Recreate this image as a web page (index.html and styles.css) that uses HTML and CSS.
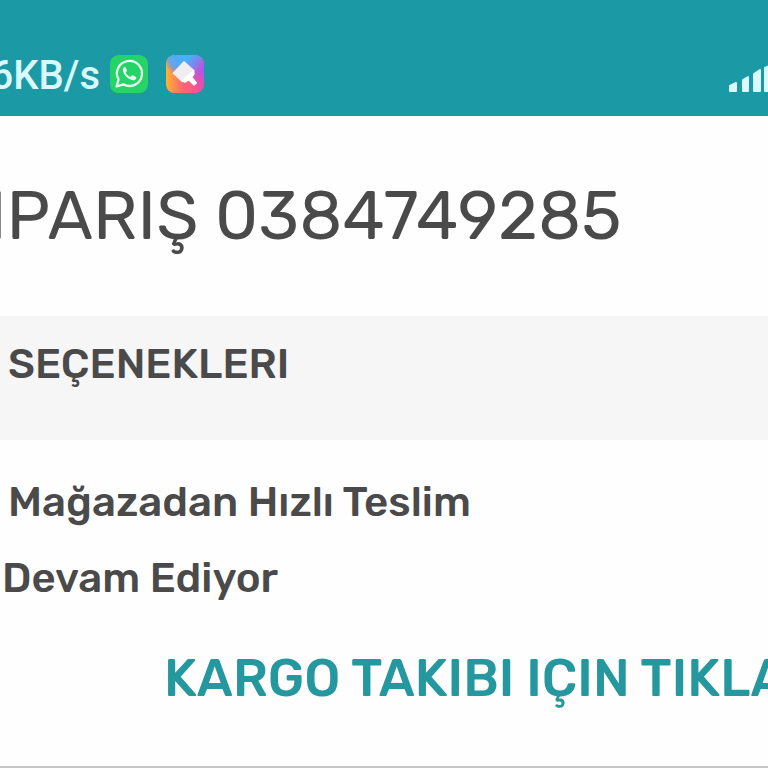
FILE: index.html
```html
<!DOCTYPE html>
<html lang="tr">
  <head>
    <meta charset="UTF-8" />
    <meta name="viewport" content="width=device-width, initial-scale=1.0" />
    <title>Sipariş</title>
    <link rel="stylesheet" href="styles.css">
  </head>
  <body>
    <div class="statusbar">
      <div class="speed"><span>6KB/s</span></div>
      <svg class="app" viewBox="0 0 40 40" aria-hidden="true">
        <rect width="40" height="40" rx="9" fill="#25d366" />
        <path d="M7 33l2-7.200a13.200 13.200 0 1 1 5.300 5.200z" fill="none" stroke="#e9fff0" stroke-width="2.400" stroke-linejoin="round" />
        <path d="M15.300 12.700c-1.200.6-2 2-1.700 3.600.8 4.800 5.500 9.600 10.300 10.300 1.700.2 3.200-.7 3.700-2.200.2-.8.100-1.200-.5-1.500l-3.100-1.500c-.5-.2-.9-.1-1.200.3l-1.200 1.500c-2.300-.9-4-2.500-5.100-4.700l1.200-1.500c.2-.3.200-.7.100-1l-1.400-3.100c-.2-.4-.6-.5-1.100-.2z" fill="#e9fff0" />
      </svg>
      <svg class="app" viewBox="0 0 40 40" aria-hidden="true">
        <defs>
          <linearGradient id="base" x1="0" y1="0" x2="1" y2="0">
            <stop offset="0" stop-color="#fdb52e" />
            <stop offset="0.400" stop-color="#ff6a6e" />
            <stop offset="1" stop-color="#f846a8" />
          </linearGradient>
          <radialGradient id="blue" cx="0.500" cy="0" r="0.600">
            <stop offset="0" stop-color="#3fb4ff" />
            <stop offset="0.700" stop-color="#4fa8fb" stop-opacity="0.900" />
            <stop offset="1" stop-color="#7a80f0" stop-opacity="0" />
          </radialGradient>
          <radialGradient id="purple" cx="1" cy="0.400" r="0.500">
            <stop offset="0" stop-color="#a35cf5" />
            <stop offset="1" stop-color="#c050e0" stop-opacity="0" />
          </radialGradient>
        </defs>
        <rect width="40" height="40" rx="9" fill="url(#base)" />
        <rect width="40" height="40" rx="9" fill="url(#blue)" />
        <rect width="40" height="40" rx="9" fill="url(#purple)" />
        <path d="M19 7.500L29 16.500 17 27.500 8 19z" fill="#f0eef2" stroke="#f0eef2" stroke-width="2" stroke-linejoin="round" />
        <path d="M17 27.500L29 16.500 29.500 20 27 23.500 32 29.500 29.500 31.500 24 26 20 28.500z" fill="#fff" stroke="#fff" stroke-width="1.500" stroke-linejoin="round" />
      </svg>
      <svg class="signal" viewBox="0 0 39 28" aria-hidden="true">
        <g fill="#d9fbff" stroke="#d9fbff" stroke-width="2" stroke-linejoin="round">
          <path d="M1 22l6-3v8H1z" />
          <path d="M14 16l5-3v14h-5z" />
          <path d="M25 10l6-4v21h-6z" />
          <path d="M36 4l6-3v26h-6z" />
        </g>
      </svg>
    </div>

    <h1 class="title">IPARIŞ 0384749285</h1>

    <h2 class="section">SEÇENEKLERI</h2>

    <div class="delivery">
      <p>Mağazadan Hızlı Teslim</p>
      <p class="state">Devam Ediyor</p>
      <a class="tracking" href="#">KARGO TAKIBI IÇIN TIKLA</a>
    </div>
  </body>
</html>
```

FILE: styles.css
```css
* {
  box-sizing: border-box;
}
body {
  margin: 0;
  background-color: #fefefe;
  color: #4a4a4a;
  font-family: Rubik, Inter, sans-serif;
  overflow-x: hidden;
}
.statusbar {
  display: flex;
  align-items: center;
  gap: 18px;
  height: 116px;
  padding-top: 32px;
  background-color: #1b9aa6;
}
.speed {
  display: flex;
  justify-content: flex-end;
  width: 100px;
  margin-right: -8px;
  padding-top: 4px;
  overflow: hidden;
  color: #d9fbff;
  font-family: Roboto, sans-serif;
  font-size: 40px;
  font-weight: 500;
  line-height: 56px;
}
.app {
  width: 38px;
  height: 38px;
}
.signal {
  width: 39px;
  height: 28px;
  margin-top: 8px;
  margin-left: auto;
}
.title {
  margin: 0 0 0 -12px;
  padding: 60px 0;
  font-size: 68px;
  font-weight: 400;
  line-height: 80px;
  white-space: nowrap;
}
.section {
  margin: 0;
  padding: 24px 8px 52px;
  background-color: #f6f6f6;
  font-size: 42px;
  font-weight: 500;
  line-height: 48px;
}
.delivery {
  padding: 38px 0 58px;
  border-bottom: 2px solid #c6c6c6;
  font-size: 42px;
  font-weight: 500;
  line-height: 48px;
  overflow: hidden;
}
.delivery p {
  margin: 0 8px 28px;
}
.delivery .state {
  margin: 0 2px 46px;
}
.tracking {
  display: block;
  margin-left: 164px;
  color: #25989f;
  font-size: 52px;
  line-height: 60px;
  text-decoration: none;
  white-space: nowrap;
}
```
